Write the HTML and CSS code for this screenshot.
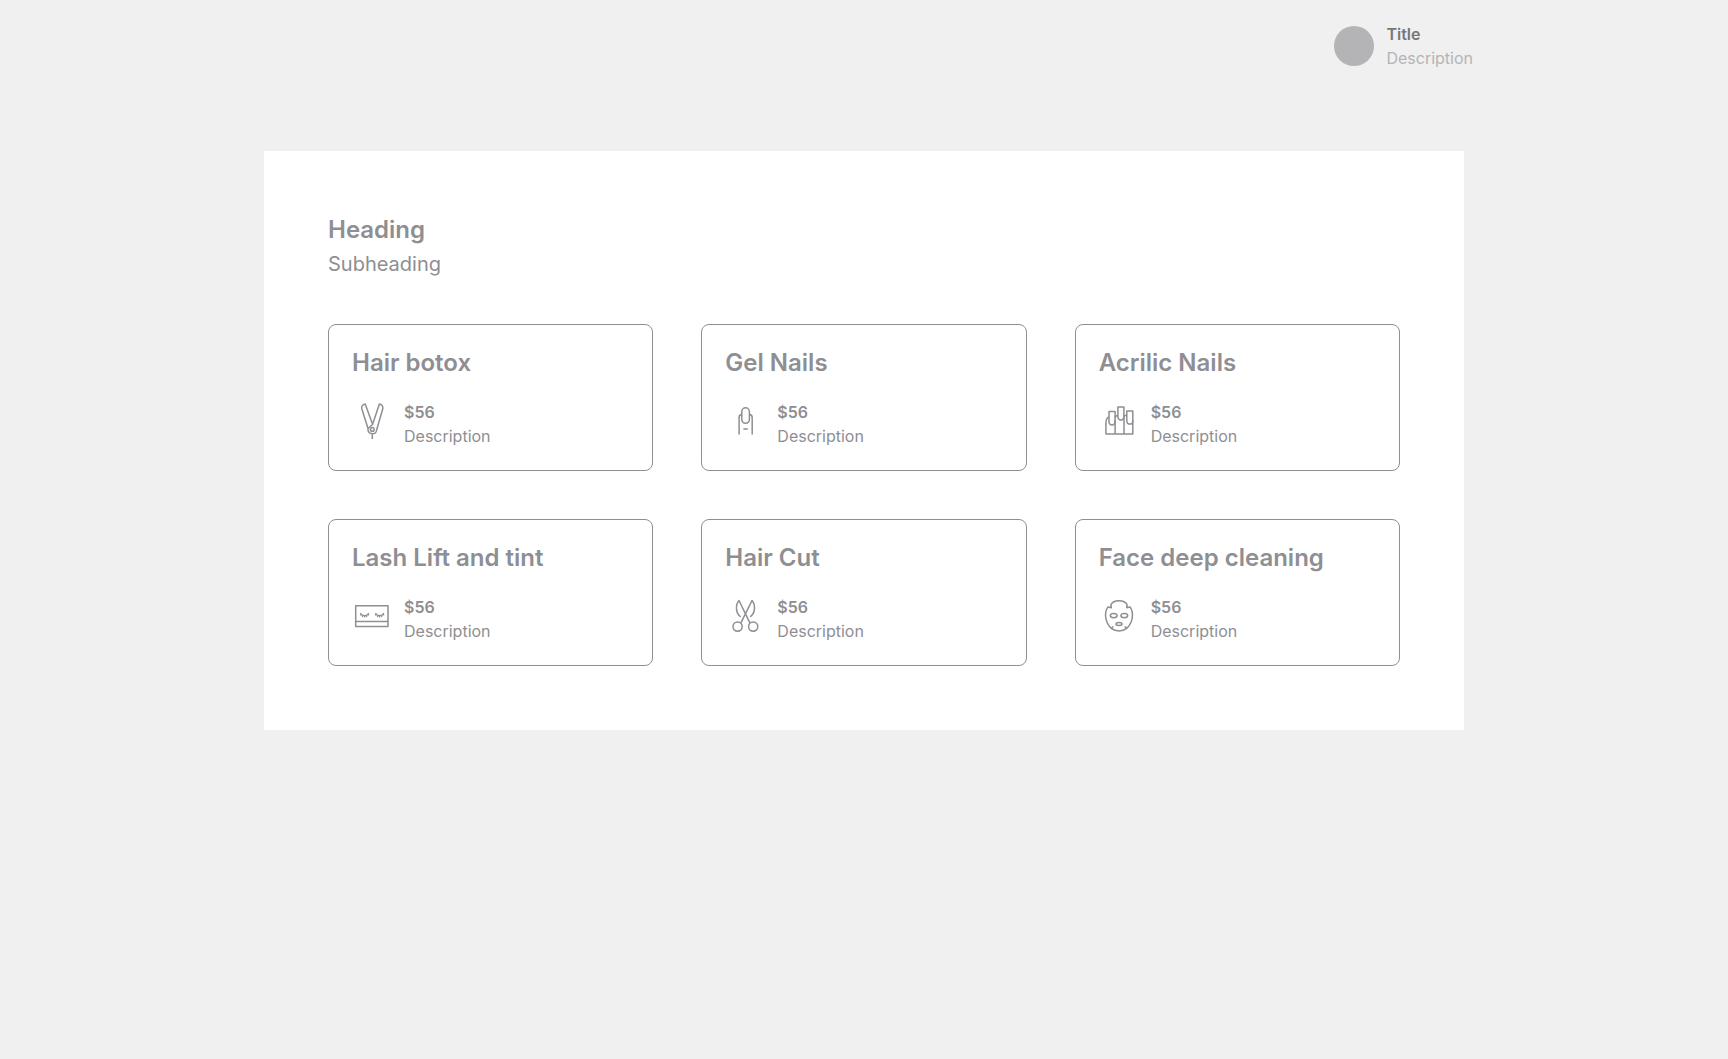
FILE: index.html
```html
<!DOCTYPE html>
<html lang="en">
<head>
<meta charset="utf-8">
<meta name="viewport" content="width=device-width, initial-scale=1">
<title>Heading</title>
<link rel="stylesheet" href="styles.css">
</head>
<body>
<header class="topbar">
  <div class="profile">
    <span class="avatar"></span>
    <div class="profile-text">
      <p class="profile-title">Title</p>
      <p class="profile-description">Description</p>
    </div>
  </div>
</header>
<main class="panel">
  <h1 class="heading">Heading</h1>
  <p class="subheading">Subheading</p>
  <ul class="cards">
    <li class="card">
      <h2 class="card-title">Hair botox</h2>
      <div class="service">
        <svg class="icon" viewBox="0 0 40 40" aria-hidden="true">
          <path d="M16 25.500 9.800 5.800C9.200 3.700 10.400 1.600 13.200 1L20.300 20.500M24.500 27.500 30.800 5.800C31.400 3.700 30.100 1.600 27.400 1L20.500 21.500 16 25.500C15.600 28.700 17.500 30.800 20.300 30.800S24.200 29.400 24.500 27.500M20.300 30.800V36"/>
          <circle cx="20.300" cy="26.400" r="1.800"/>
        </svg>
        <div>
          <p class="price">$56</p>
          <p class="description">Description</p>
        </div>
      </div>
    </li>
    <li class="card">
      <h2 class="card-title">Gel Nails</h2>
      <div class="service">
        <svg class="icon" viewBox="0 0 40 40" aria-hidden="true">
          <rect x="16.800" y="4.800" width="7.600" height="15.500" rx="3.800"/>
          <path d="M16.800 11.500C14.900 11.700 14.100 12.800 14.100 14.400V31.500M24.400 11.500C26.400 11.700 27.200 12.800 27.200 14.400V31.500M18.400 26H22.800"/>
        </svg>
        <div>
          <p class="price">$56</p>
          <p class="description">Description</p>
        </div>
      </div>
    </li>
    <li class="card">
      <h2 class="card-title">Acrilic Nails</h2>
      <div class="service">
        <svg class="icon" viewBox="0 0 40 40" aria-hidden="true">
          <path d="M10 8.600H16.100V18.500C16.100 20.500 15 21.900 13 21.900S10 20.500 10 18.500ZM18.900 3.900H24.900V13.500C24.900 15.500 23.700 16.900 21.900 16.900S18.900 15.500 18.900 13.500ZM27.800 7.900H33.800V17.700C33.800 19.700 32.600 21.100 30.800 21.100S27.800 19.700 27.800 17.700Z"/>
          <path d="M10 13.500C7.800 15 6.900 17 6.900 20.500V31H33.800V17M16.100 17V31M25 13V31M18.900 12.500C17 12.600 16.100 13.500 16.100 15M24.900 12.500H27.800"/>
        </svg>
        <div>
          <p class="price">$56</p>
          <p class="description">Description</p>
        </div>
      </div>
    </li>
    <li class="card">
      <h2 class="card-title">Lash Lift and tint</h2>
      <div class="service">
        <svg class="icon" viewBox="0 0 40 40" aria-hidden="true">
          <path d="M3.700 7.700H36V28.600H3.700ZM3.700 23.600H36"/>
          <path d="M8.500 15C9.500 18.500 15.600 18.500 16.700 15M9.500 16.200 8 17.400M11 17.300 10.300 19M12.600 17.600V19.500M14.200 17.300 14.900 19M15.700 16.200 17.200 17.400M23.500 15C24.500 18.500 30.600 18.500 31.700 15M24.500 16.200 23 17.400M26 17.300 25.300 19M27.600 17.600V19.500M29.200 17.300 29.900 19M30.700 16.200 32.200 17.400" stroke-width="1.200"/>
        </svg>
        <div>
          <p class="price">$56</p>
          <p class="description">Description</p>
        </div>
      </div>
    </li>
    <li class="card">
      <h2 class="card-title">Hair Cut</h2>
      <div class="service">
        <svg class="icon" viewBox="0 0 40 40" aria-hidden="true">
          <circle cx="12.600" cy="28.600" r="4.600"/>
          <circle cx="28.200" cy="28.600" r="4.600"/>
          <path d="M25 25.200 14 2.500C10.200 7 10.600 15 15.600 18.800M15.800 25.200 27 2.500C30.800 7 30.400 15 25.200 18.800"/>
        </svg>
        <div>
          <p class="price">$56</p>
          <p class="description">Description</p>
        </div>
      </div>
    </li>
    <li class="card">
      <h2 class="card-title">Face deep cleaning</h2>
      <div class="service">
        <svg class="icon" viewBox="0 0 40 40" aria-hidden="true">
          <path d="M12.300 9.700 11.900 6.700C14.500 1.400 25.500 1.400 28.100 6.700L27.700 9.700 31 8.900C35.500 15.200 33.500 25.200 27.400 30.600 23.500 33.700 16.500 33.700 12.600 30.600 6.500 25.200 4.500 15.200 9 8.900ZM12.600 30.600 14.200 28.400M27.400 30.600 25.800 28.400"/>
          <ellipse cx="14.700" cy="17.600" rx="3.400" ry="2.200"/>
          <ellipse cx="25.300" cy="17.600" rx="3.400" ry="2.200"/>
          <ellipse cx="20" cy="26.100" rx="3" ry="1.500"/>
        </svg>
        <div>
          <p class="price">$56</p>
          <p class="description">Description</p>
        </div>
      </div>
    </li>
  </ul>
</main>
</body>
</html>
```
FILE: styles.css
```css
* {
  box-sizing: border-box;
  margin: 0;
  padding: 0;
}

body {
  background: #f0f0f0;
  color: #8e8e93;
  font: 400 16px/24px Inter, "Liberation Sans", sans-serif;
}

.topbar {
  display: flex;
  justify-content: flex-end;
  max-width: 1218px;
  margin: 0 auto;
  padding: 22px 0 81px;
}

.profile,
.service {
  display: flex;
  align-items: center;
  gap: 12px;
}

.avatar {
  width: 40px;
  height: 40px;
  border-radius: 50%;
  background: #b4b4b6;
}

.profile-title {
  color: #77777a;
  font-weight: 600;
}

.profile-description {
  color: #b4b4b6;
}

.panel {
  max-width: 1200px;
  margin: 0 auto;
  padding: 64px;
  background: #fff;
}

.heading,
.card-title {
  font-size: 24px;
  font-weight: 600;
  line-height: 29px;
}

.subheading {
  margin-top: 8px;
  font-size: 20px;
}

.cards {
  display: grid;
  grid-template-columns: repeat(auto-fit, minmax(280px, 1fr));
  gap: 48px;
  margin-top: 48px;
  list-style: none;
}

.card {
  padding: 23px 23px 22px;
  border: 1px solid #8e8e93;
  border-radius: 8px;
}

.card-title {
  margin-bottom: 23px;
}

.price {
  font-weight: 600;
}

.icon {
  width: 40px;
  height: 40px;
  margin-bottom: 2px;
  fill: none;
  stroke: #8e8e93;
  stroke-width: 1.5;
  stroke-linejoin: round;
}
```
